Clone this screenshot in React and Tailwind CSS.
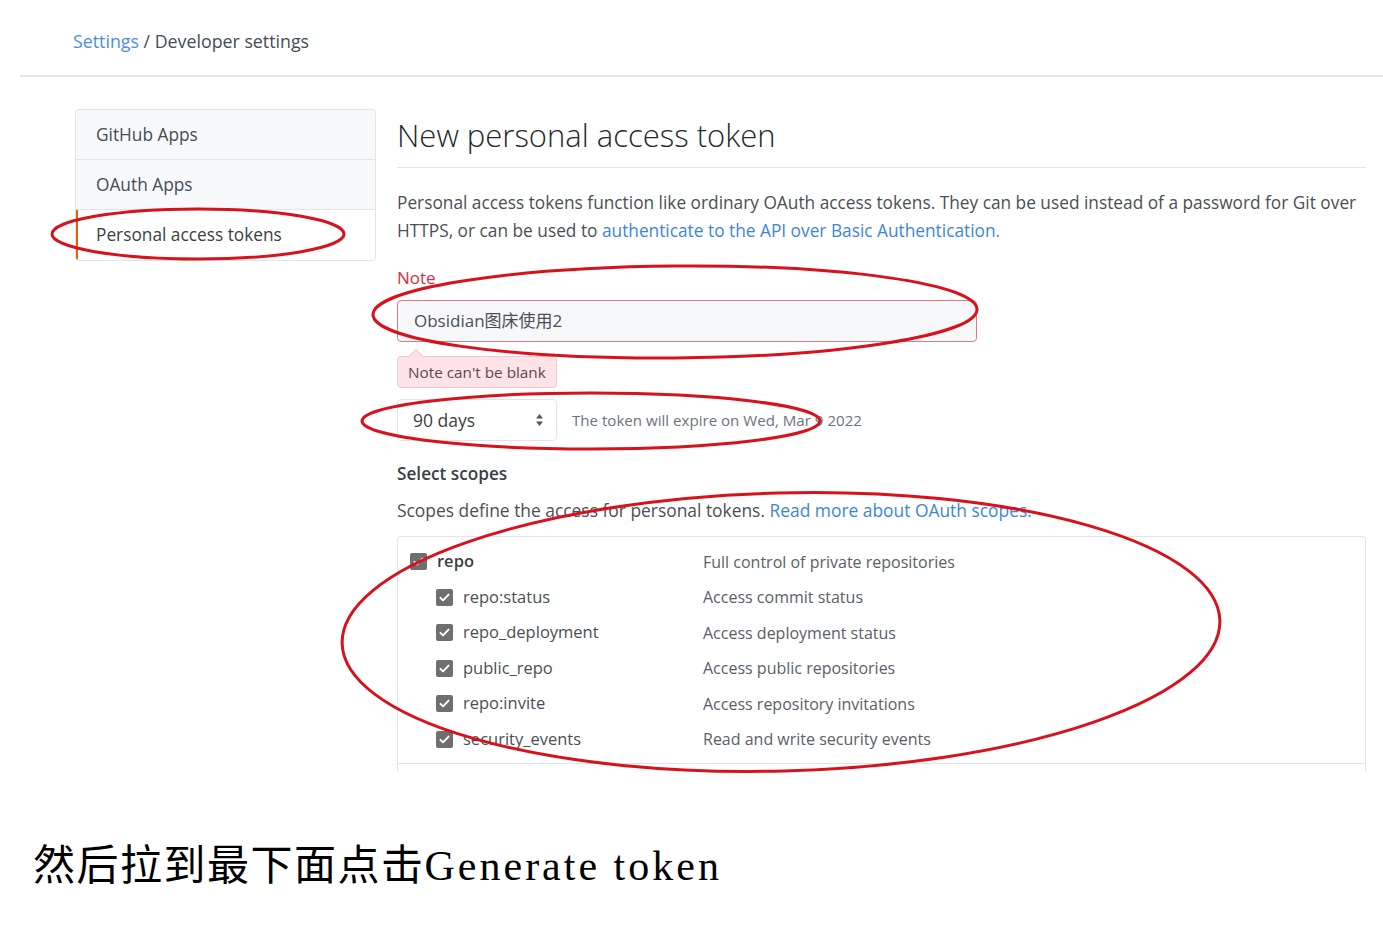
import React from 'react'

const SCOPES = [
  { name: 'repo', desc: 'Full control of private repositories', top: true },
  { name: 'repo:status', desc: 'Access commit status' },
  { name: 'repo_deployment', desc: 'Access deployment status' },
  { name: 'public_repo', desc: 'Access public repositories' },
  { name: 'repo:invite', desc: 'Access repository invitations' },
  { name: 'security_events', desc: 'Read and write security events' },
]

const Check = () => (
  <span className="w-[17px] h-[17px] rounded-[2px] bg-[#6f6f6f] flex items-center justify-center shrink-0">
    <svg width="13" height="13" viewBox="0 0 16 16" fill="none">
      <path d="M3 8.5l3.2 3L13 4.5" stroke="#fff" strokeWidth="2.4" strokeLinecap="round" strokeLinejoin="round" />
    </svg>
  </span>
)

const SideItem = ({ label, active }) => (
  <div
    className={
      active
        ? 'h-[50px] flex items-center pl-[18px] pr-[20px] text-[17.3px] text-[#3a3f44] bg-white border-l-2 border-[#e36209]'
        : 'h-[50px] flex items-center px-[20px] text-[17.3px] text-[#444d56] border-b border-[#e1e4e8]'
    }
  >
    {label}
  </div>
)

export default function App() {
  return (
    <div className="relative w-[1383px] h-[948px] bg-white overflow-hidden font-['Open_Sans','Noto_Sans_CJK_SC',sans-serif]">
      {/* breadcrumb */}
      <div className="ml-[20px] h-[77px] border-b-2 border-[#e4e6e8] pl-[53px] pt-[28px] text-[17.8px] text-[#444d56]">
        <span className="text-[#4a8fe0]">Settings</span> / Developer settings
      </div>

      <div className="flex pl-[75px] pt-[32px]">
        {/* sidebar */}
        <div className="w-[301px] shrink-0">
          <div className="rounded-[4px] border border-[#e1e4e8] bg-[#f8f9fa] overflow-hidden">
            <SideItem label="GitHub Apps" />
            <SideItem label="OAuth Apps" />
            <SideItem label="Personal access tokens" active />
          </div>
        </div>

        {/* main */}
        <div className="ml-[21px] w-[969px]">
          <h2 className="leading-[52px] pb-[6px] border-b border-[#e1e4e8] text-[31px] font-light text-[#24292e]">
            New personal access token
          </h2>

          <p className="mt-[21px] text-[17.3px] leading-[28px] text-[#4a4f55]">
            Personal access tokens function like ordinary OAuth access tokens. They can be used instead of a password for Git over HTTPS, or can be used to{' '}
            <span className="text-[#3b87d8]">authenticate to the API over Basic Authentication.</span>
          </p>

          <div className="mt-[21px] leading-[24px] text-[17px] text-[#d6303f]">Note</div>
          <div className="mt-[10px] w-[580px] h-[42px] rounded-[4px] border border-[#e07a84] bg-[#f6f8fa] flex items-center px-[16px] text-[17px] text-[#4a4f55]">
            Obsidian图床使用2
          </div>

          <div className="relative mt-[14px] inline-flex h-[32px] items-center px-[10px] rounded-[4px] border border-[#f0c8cd] bg-[#ffe3e6] text-[15.3px] text-[#5a4a4d]">
            <span className="absolute -top-[6px] left-[13px] w-[10px] h-[10px] rotate-45 bg-[#ffe3e6] border-l border-t border-[#f0c8cd]" />
            Note can't be blank
          </div>

          <div className="mt-[11px] flex items-center">
            <div className="w-[160px] h-[42px] rounded-[4px] border border-[#e1e4e8] bg-white flex items-center justify-between pl-[15px] pr-[12px] text-[17.5px] text-[#3a3f44]">
              90 days
              <svg width="9" height="14" viewBox="0 0 9 14">
                <path d="M4.5 1L8 5.5H1z M4.5 13L8 8.5H1z" fill="#555" />
              </svg>
            </div>
            <span className="ml-[15px] text-[15.1px] text-[#6a737d]">The token will expire on Wed, Mar 9 2022</span>
          </div>

          <div className="mt-[21px] leading-[24px] text-[17.2px] font-semibold text-[#3a3f44]">Select scopes</div>
          <div className="mt-[12px] leading-[24px] text-[17.4px] text-[#4a4f55]">
            Scopes define the access for personal tokens.{' '}
            <span className="text-[#3b87d8]">Read more about OAuth scopes.</span>
          </div>

          <div className="mt-[14px] h-[235px] overflow-hidden rounded-t-[4px] border border-b-0 border-[#e1e4e8] pt-[7px]">
            <div className="pb-[6px] border-b border-[#e1e4e8]">
              {SCOPES.map((s) => (
                <div key={s.name} className="h-[35.5px] flex items-center">
                  <div className={s.top ? 'w-[305px] flex items-center gap-[10px] pl-[12px]' : 'w-[305px] flex items-center gap-[10px] pl-[38px]'}>
                    <Check />
                    <span className={s.top ? 'text-[16.5px] font-semibold text-[#3a3f44]' : 'text-[16.5px] text-[#4a4f55]'}>{s.name}</span>
                  </div>
                  <span className="text-[16px] text-[#5a6068]">{s.desc}</span>
                </div>
              ))}
            </div>
          </div>
        </div>
      </div>

      {/* caption */}
      <div className="mt-[70px] pl-[33px] text-[42px] leading-[50px] text-black font-['Liberation_Serif','Noto_Sans_CJK_SC',serif] tracking-[1.5px]">
        然后拉到最下面点击<span className="tracking-[3px]">Generate token</span>
      </div>

      {/* red annotation ellipses */}
      <svg className="absolute inset-0 pointer-events-none" width="1383" height="948">
        <g fill="none" stroke="#d8121c" strokeWidth="3">
          <ellipse cx="198" cy="234" rx="146" ry="25" />
          <ellipse cx="675" cy="312" rx="302" ry="46" transform="rotate(-0.5 675 312)" />
          <ellipse cx="591" cy="421" rx="229" ry="28" />
          <ellipse cx="781" cy="632" rx="439" ry="139" transform="rotate(-1.5 781 632)" />
        </g>
      </svg>
    </div>
  )
}
